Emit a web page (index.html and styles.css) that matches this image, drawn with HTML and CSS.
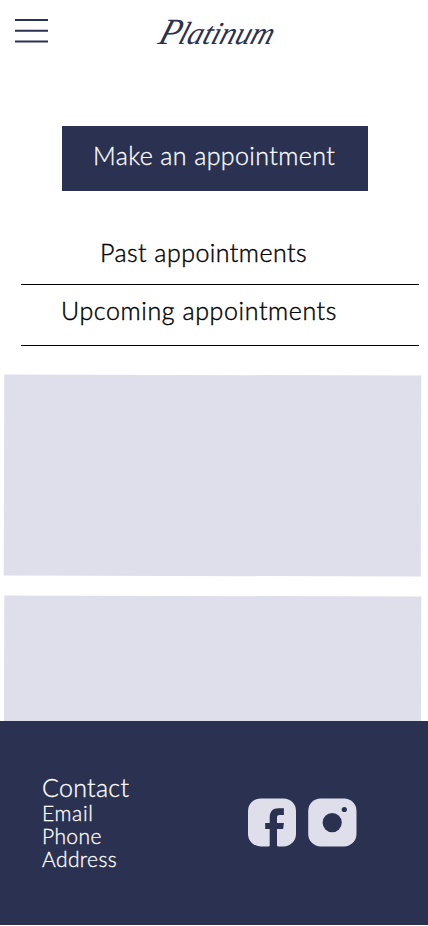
FILE: index.html
```html
<!DOCTYPE html>
<html lang="en">
<head>
<meta charset="utf-8">
<meta name="viewport" content="width=device-width, initial-scale=1">
<title>Platinum</title>
<link rel="stylesheet" href="styles.css">
</head>
<body>
<div class="page">
  <header class="header">
    <button class="menu" aria-label="Menu">
      <svg width="33" height="26" viewBox="0 0 33 26"><path d="M0 2h33M0 12.8h33M0 23.6h33" stroke="#2b3150" stroke-width="2"/></svg>
    </button>
    <svg class="logo" width="124" height="40" viewBox="0 0 124 40">
      <g transform="translate(3 31.5) skewX(-18)">
        <text class="logo-cap" x="0" y="0" textLength="21" lengthAdjust="spacingAndGlyphs">P</text>
        <text class="logo-text" x="20" y="0" textLength="94" lengthAdjust="spacingAndGlyphs">latinum</text>
      </g>
    </svg>
  </header>
  <main class="main">
    <button class="cta"><span class="cta-text">Make an appointment</span></button>
    <nav class="tabs">
      <a class="tab tab-past"><span class="past-text">Past appointments</span></a>
      <a class="tab tab-upcoming"><span class="upcoming-text">Upcoming appointments</span></a>
    </nav>
    <section class="cards">
      <div class="card"></div>
      <div class="card card-second"></div>
    </section>
  </main>
  <footer class="footer">
    <div class="contact">
      <h2 class="contact-title">Contact</h2>
      <a class="email">Email</a>
      <a class="phone">Phone</a>
      <a class="address">Address</a>
    </div>
    <div class="social">
      <svg width="48" height="49" viewBox="0 0 48 49"><rect y=".4" width="48" height="48" rx="12.5" fill="#dfdeeb"/><path d="M20.8 49l.9-1.5V31h-4.5v-6h4.5v-5.5c0-6 3.3-9.2 8.5-9.2h5.7v6.6h-4.3c-2 0-2.6.9-2.6 2.8v5.3h6.9l-.8 6H29v16.5l1.2 1.5z" fill="#2b3150"/></svg>
      <svg width="49" height="49" viewBox="0 0 49 49"><rect x=".2" y=".4" width="48.3" height="48" rx="12.5" fill="#dfdeeb"/><circle cx="24.2" cy="24.6" r="9.6" fill="#2b3150"/><circle cx="36.3" cy="11.5" r="2.6" fill="#2b3150"/></svg>
    </div>
  </footer>
</div>
</body>
</html>
```
FILE: styles.css
```css
* { box-sizing: border-box; }
body { margin: 0; background: #fff; font-family: Lato, "Open Sans", sans-serif; font-weight: 300; }
.page { display: flex; flex-direction: column; width: 428px; height: 926px; overflow: hidden; }
.header { display: flex; align-items: flex-start; height: 126px; padding: 12px 15px 0; }
.menu { display: block; width: 33px; height: 26px; margin-top: 6px; padding: 0; border: 0; background: none; }
.menu svg { display: block; }
.logo { margin-left: 106px; overflow: visible; }
.logo text { font-family: "Liberation Serif", serif; font-style: italic; fill: #2b3150; }
.logo .logo-cap { font-size: 37px; }
.logo .logo-text { font-size: 32px; }
.main { display: flex; flex-direction: column; height: 595px; overflow: hidden; }
.cta { display: flex; justify-content: flex-start; flex: none; width: 306px; height: 65px; margin-left: 62px; padding: 15px 0 0 31px; border: 0; background: #2b3150; color: #fff; font: 300 25px/28px Lato, sans-serif; letter-spacing: .4px; -webkit-text-stroke: .3px; }
.cta span, .tab span { white-space: nowrap; }
.tabs { display: flex; flex: none; flex-direction: column; width: 398px; margin: 46px 0 0 21px; color: #000; font-size: 25px; line-height: 28px; letter-spacing: .45px; -webkit-text-stroke: .4px; }
.tab { border-bottom: 1px solid #000; }
.tab-past { height: 48px; padding: 1px 0 0 79px; }
.tab-upcoming { height: 61px; padding: 11px 0 0 40px; letter-spacing: .6px; }
.cards { display: flex; flex: none; flex-direction: column; gap: 21px; margin: 28.5px 0 0 4.3px; }
.card { flex: none; width: 416.8px; height: 200.5px; background: #dfdeeb; transform: rotate(.17deg); }
.card-second { margin-left: -.3px; }
.footer { display: flex; height: 204px; padding: 53px 42px 0; background: #2b3150; color: #fff; -webkit-text-stroke: .3px; }
.contact { display: flex; flex-direction: column; width: 206px; font-size: 21px; line-height: 23px; letter-spacing: .4px; }
.contact-title { margin: 0; font-size: 25px; font-weight: 300; line-height: 27px; letter-spacing: .3px; }
.email { letter-spacing: .7px; }
.social { display: flex; gap: 12px; padding-top: 24px; }
```
